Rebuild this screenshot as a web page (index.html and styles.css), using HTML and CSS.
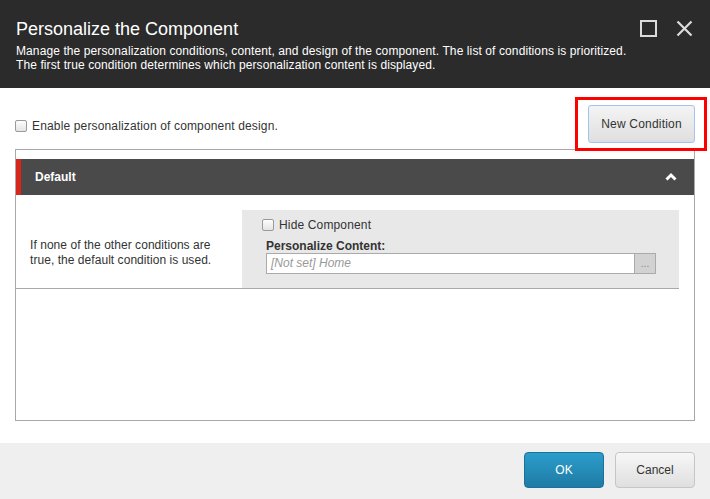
FILE: index.html
```html
<!DOCTYPE html>
<html>
<head>
<meta charset="utf-8">
<link rel="stylesheet" href="styles.css">
</head>
<body>
<div class="dialog">
  <div class="header">
    <div class="header-text">
      <div class="title">Personalize the Component</div>
      <div class="subtitle">Manage the personalization conditions, content, and design of the component. The list of conditions is prioritized.<br>The first true condition determines which personalization content is displayed.</div>
    </div>
    <div class="win-icons">
      <svg width="17" height="17" viewBox="0 0 17 17"><rect x="1" y="1" width="15" height="15" fill="none" stroke="#dcdcdc" stroke-width="2"/></svg>
      <svg width="17" height="17" viewBox="0 0 17 17"><path d="M1.5 1.5 L15.5 15.5 M15.5 1.5 L1.5 15.5" stroke="#dcdcdc" stroke-width="2.2" fill="none"/></svg>
    </div>
  </div>
  <div class="toolbar">
    <label class="check-row"><span class="checkbox"></span><span>Enable personalization of component design.</span></label>
    <div class="btn-wrap">
      <button class="btn new-cond">New Condition</button>
      <div class="highlight"></div>
    </div>
  </div>
  <div class="panel">
    <div class="cond-header">
      <span>Default</span>
      <svg width="12" height="9" viewBox="0 0 12 9"><polyline points="1.5,7.5 6,3 10.5,7.5" fill="none" stroke="#fff" stroke-width="3"/></svg>
    </div>
    <div class="cond-body">
      <div class="cond-desc">If none of the other conditions are<br>true, the default condition is used.</div>
      <div class="cond-settings">
        <label class="check-row"><span class="checkbox"></span><span>Hide Component</span></label>
        <div class="field-label">Personalize Content:</div>
        <div class="field">
          <div class="field-input">[Not set] Home</div>
          <div class="field-btn">...</div>
        </div>
      </div>
    </div>
  </div>
  <div class="footer">
    <button class="btn ok">OK</button>
    <button class="btn cancel">Cancel</button>
  </div>
</div>
</body>
</html>
```
FILE: styles.css
```css
* { box-sizing: border-box; }
html, body { margin: 0; padding: 0; background: #fff; }
body { font-family: "Liberation Sans", Arial, sans-serif; color: #333; width: 710px; height: 499px; overflow: hidden; }
.dialog { display: flex; flex-direction: column; height: 499px; }

.header { background: #2b2b2b; height: 88px; padding: 18px 16px 0 16px; display: flex; justify-content: space-between; color: #fff; }
.title { font-size: 18px; line-height: 22px; }
.subtitle { font-size: 12px; line-height: 14px; margin-top: 4px; letter-spacing: 0.1px; }
.win-icons { display: flex; gap: 19px; padding-top: 2px; margin-right: 1px; }

.toolbar { display: flex; justify-content: space-between; align-items: center; padding: 17px 15px 6px 15px; }
.check-row { display: flex; align-items: center; gap: 5px; font-size: 12px; color: #333; letter-spacing: 0.15px; }
.checkbox { width: 12px; height: 12px; border: 1px solid #9a9a9a; border-radius: 2px; background: linear-gradient(#fdfdfd, #e4e4e4); display: inline-block; }
.toolbar .check-row { margin-top: 4px; }

.btn-wrap { position: relative; }
.btn { font-family: "Liberation Sans", Arial, sans-serif; font-size: 12px; cursor: pointer; }
.new-cond { width: 107px; height: 38px; border: 1px solid #a4c3ee; border-radius: 3px; background: linear-gradient(#f4f4f4, #dfdfdf); color: #333; padding: 0; letter-spacing: 0.2px; }
.highlight { position: absolute; left: -13px; top: -8px; width: 132px; height: 54px; border: 3px solid #ff0000; pointer-events: none; }

.panel { margin: 0 15px; border: 1px solid #a8a8a8; height: 272px; padding-top: 9px; }
.cond-header { height: 36px; background: #4a4a4a; border-left: 5px solid #d9261c; display: flex; align-items: center; justify-content: space-between; padding: 0 16px 0 14px; color: #fff; font-weight: bold; font-size: 12px; }
.cond-header svg { margin-top: -1px; margin-right: 1px; }
.cond-body { display: flex; align-items: stretch; margin-right: 15px; border-bottom: 1px solid #a8a8a8; padding-top: 15px; height: 94px; }
.cond-desc { width: 226px; padding-left: 14px; font-size: 12px; line-height: 15px; align-self: center; padding-top: 7px; letter-spacing: 0.05px; }
.cond-settings { flex: 1; background: #e8e8e8; padding: 8px 23px 0 20px; }
.cond-settings .check-row { margin-bottom: 7px; }
.field-label { font-weight: bold; font-size: 12px; line-height: 14px; padding-left: 4px; }
.field { display: flex; margin-left: 4px; height: 21px; }
.field-input { flex: 1; background: #fff; border: 1px solid #aaa; font-style: italic; color: #999; font-size: 12px; line-height: 19px; padding-left: 4px; }
.field-btn { width: 21px; background: #d2d2d2; border: 1px solid #aaa; border-left: none; font-size: 10px; color: #888; text-align: center; line-height: 19px; }

.footer { margin-top: auto; height: 56px; background: #efefef; display: flex; justify-content: flex-end; align-items: flex-start; gap: 11px; padding: 9px 15px 0 0; }
.ok { width: 80px; height: 36px; border: 1px solid #1e7099; border-radius: 4px; background: linear-gradient(#2c9dcc, #1f7ba4); color: #fff; }
.cancel { width: 80px; height: 36px; border: 1px solid #c6c6c6; border-radius: 4px; background: linear-gradient(#f7f7f7, #dfdfdf); color: #333; }
```
